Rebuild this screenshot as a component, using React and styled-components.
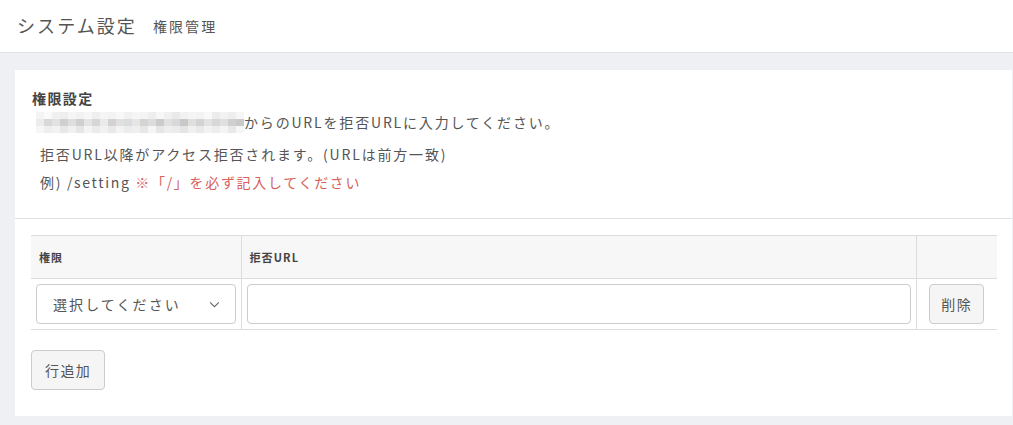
import React from "react";
import styled, { createGlobalStyle } from "styled-components";

const GlobalStyle = createGlobalStyle`
  html, body {
    margin: 0;
    padding: 0;
    background: #eff0f3;
  }
  body {
    font-family: "Noto Sans CJK JP", "Noto Sans", sans-serif;
    color: #555;
    letter-spacing: 0.13em;
  }
`;

// pixelated (mosaic) cells standing in for the hidden host name
const mosaicTop = ["#f4f4f4", "#fafafa", "#f0f0f0", "#eeeeee", "#f6f6f6", "#f2f2f2", "#f7f7f7", "#efefef", "#f5f5f5", "#f3f3f3", "#f8f8f8", "#f1f1f1", "#f6f6f6", "#f4f4f4", "#eeeeee", "#f7f7f7", "#f0f0f0", "#e9e9e9", "#f2f2f2", "#f5f5f5", "#f3f3f3", "#f9f9f9", "#ececec", "#f2f2f2", "#eeeeee", "#f6f6f6"];
const mosaicMid = ["#ececec", "#d8d8d8", "#e2e2e2", "#d0d0d0", "#dedede", "#cfcfcf", "#e4e4e4", "#d6d6d6", "#eaeaea", "#d2d2d2", "#e0e0e0", "#d9dde0", "#e6e6e6", "#d4d4d4", "#dcdcdc", "#cbcbcb", "#e1e1e1", "#d6d9dc", "#c8c8c8", "#dfdfdf", "#d3d3d3", "#e3e3e3", "#d7d7d7", "#e0e0e0", "#cfcfcf", "#c9c9c9"];
const mosaicBot = ["#f6f6f6", "#eeeeee", "#f2f2f2", "#e8e8e8", "#f0f0f0", "#e6e6e6", "#f4f4f4", "#ebebeb", "#f1f1f1", "#e9e9e9", "#f3f3f3", "#ececec", "#efefef", "#e7e7e7", "#f5f5f5", "#e4e6e8", "#eeeeee", "#ebebeb", "#e5e5e5", "#f0f0f0", "#e9e9e9", "#f2f2f2", "#ededed", "#f4f4f4", "#e8e8e8", "#f6f6f6"];

export default function App() {
  return (
    <>
      <GlobalStyle />
      <Header>
        <PageTitle>システム設定</PageTitle>
        <SubTitle>権限管理</SubTitle>
      </Header>
      <Main>
        <Card>
          <CardHead>
            <CardTitle>権限設定</CardTitle>
            <Line $first>
              <Mosaic aria-hidden="true">
                {[mosaicTop, mosaicMid, mosaicBot].map((row, r) => (
                  <MosaicRow key={r}>
                    {row.map((c, i) => (
                      <MosaicCell key={i} style={{ background: c }} />
                    ))}
                  </MosaicRow>
                ))}
              </Mosaic>
              からのURLを拒否URLに入力してください。
            </Line>
            <Line>拒否URL以降がアクセス拒否されます。(URLは前方一致)</Line>
            <Line $tight>
              例) /setting <Warn>※「/」を必ず記入してください</Warn>
            </Line>
          </CardHead>
          <CardBody>
            <Table>
              <colgroup>
                <col style={{ width: "210px" }} />
                <col />
                <col style={{ width: "81px" }} />
              </colgroup>
              <thead>
                <tr>
                  <Th>権限</Th>
                  <Th>拒否URL</Th>
                  <Th />
                </tr>
              </thead>
              <tbody>
                <tr>
                  <Td>
                    <Select>
                      <span>選択してください</span>
                      <Chevron viewBox="0 0 12 8">
                        <path d="M1 1.5 6 6.5 11 1.5" />
                      </Chevron>
                    </Select>
                  </Td>
                  <Td>
                    <Input type="text" />
                  </Td>
                  <Td $center>
                    <Button>削除</Button>
                  </Td>
                </tr>
              </tbody>
            </Table>
            <Button $wide>行追加</Button>
          </CardBody>
        </Card>
      </Main>
    </>
  );
}

const Header = styled.header`
  display: flex;
  align-items: center;
  height: 52px;
  padding: 0 17px;
  background: #fff;
  border-bottom: 1px solid #e2e3e6;
`;

const PageTitle = styled.h1`
  margin: 0;
  font-size: 18px;
  font-weight: 400;
  color: #555;
  line-height: 1;
  padding-bottom: 2px;
`;

const SubTitle = styled.span`
  margin-left: 16px;
  font-size: 14px;
  color: #555;
`;

const Main = styled.main`
  padding: 17px 1px 10px 15px;
`;

const Card = styled.section`
  background: #fff;
`;

const CardHead = styled.div`
  padding: 18px 16px 22px 17px;
  border-bottom: 1px solid #e2e2e2;
`;

const CardTitle = styled.h2`
  margin: 0;
  font-size: 14px;
  font-weight: 700;
  color: #444;
  line-height: 20px;
  letter-spacing: 0.1em;
`;

const Line = styled.p`
  display: flex;
  align-items: center;
  margin: ${(p) => (p.$first ? "0 0 4px" : "0")};
  padding-left: 8px;
  font-size: 14px;
  line-height: 28px;
  color: #555;
  white-space: pre;
  letter-spacing: ${(p) => (p.$tight ? "0.12em" : "0.13em")};
`;

const Warn = styled.span`
  color: #d8605c;
`;

const Mosaic = styled.span`
  display: inline-flex;
  flex-direction: column;
  margin-left: -4px;
  filter: blur(0.4px);
`;

const MosaicRow = styled.span`
  display: flex;
`;

const MosaicCell = styled.span`
  width: 8px;
  height: 7px;
`;

const CardBody = styled.div`
  padding: 16px 15px 26px 16px;
`;

const Table = styled.table`
  width: 100%;
  border-collapse: collapse;
  table-layout: fixed;
  margin-bottom: 20px;
`;

const Th = styled.th`
  height: 42px;
  padding: 0 8px;
  background: #f7f7f7;
  border-top: 1px solid #dcdcdc;
  border-bottom: 1px solid #dcdcdc;
  border-left: 1px solid #dcdcdc;
  text-align: left;
  font-size: 11px;
  font-weight: 700;
  color: #444;
  letter-spacing: 0.1em;

  &:first-child {
    border-left: none;
  }
`;

const Td = styled.td`
  height: 50px;
  padding: 0 5px;
  border-bottom: 1px solid #dcdcdc;
  border-left: 1px solid #dcdcdc;
  text-align: ${(p) => (p.$center ? "center" : "left")};

  &:first-child {
    border-left: none;
  }
`;

const Select = styled.div`
  display: flex;
  align-items: center;
  justify-content: space-between;
  height: 40px;
  box-sizing: border-box;
  padding: 0 15px 0 16px;
  border: 1px solid #ccc;
  border-radius: 4px;
  background: #fff;
  font-size: 14px;
  color: #555;
`;

const Chevron = styled.svg`
  width: 11px;
  height: 7px;
  fill: none;
  stroke: #666;
  stroke-width: 1.2;
`;

const Input = styled.input`
  display: block;
  width: 100%;
  height: 40px;
  box-sizing: border-box;
  border: 1px solid #ccc;
  border-radius: 4px;
  background: #fff;
  outline: none;
`;

const Button = styled.button`
  height: 40px;
  padding: 0 ${(p) => (p.$wide ? "13px" : "11px")};
  border: 1px solid #ccc;
  border-radius: 4px;
  background: #f5f5f5;
  font-family: inherit;
  font-size: 14px;
  letter-spacing: 0.1em;
  color: #555;
  cursor: pointer;
`;
